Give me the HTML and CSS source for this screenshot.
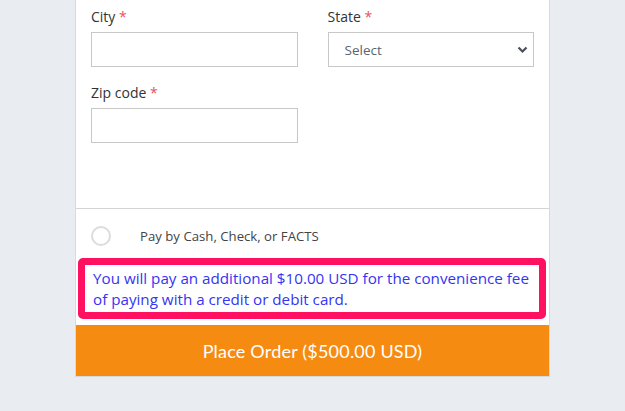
FILE: index.html
```html
<!DOCTYPE html>
<html>
<head>
<meta charset="utf-8">
<link rel="stylesheet" href="styles.css">
</head>
<body>
<div class="card">
  <div class="fields">
    <div class="field">
      <label class="label">City <span class="req">*</span></label>
      <input class="input" type="text">
    </div>
    <div class="field">
      <label class="label">State <span class="req">*</span></label>
      <div class="select-wrap">
        <select class="select"><option>Select</option></select>
        <svg class="chev" width="11" height="8" viewBox="0 0 11 8"><path d="M1.5 1.5 L5.5 5.5 L9.5 1.5" fill="none" stroke="#4a5058" stroke-width="2.2"/></svg>
      </div>
    </div>
    <div class="field">
      <label class="label">Zip code <span class="req">*</span></label>
      <input class="input" type="text">
    </div>
  </div>
  <div class="payment">
    <div class="radio-row">
      <span class="radio"></span>
      <span class="radio-text">Pay by Cash, Check, or FACTS</span>
    </div>
    <div class="notice">You will pay an additional $10.00 USD for the convenience fee of paying with a credit or debit card.</div>
  </div>
  <button class="order">Place Order ($500.00 USD)</button>
</div>
</body>
</html>
```
FILE: styles.css
```css
html, body {
  margin: 0;
  padding: 0;
  background: #e9ecf0;
}
body {
  font-family: "Open Sans", "Noto Sans", sans-serif;
}
.card {
  width: 473px;
  margin: 0 auto;
  background: #fff;
  border: 1px solid #d6dade;
  border-top: none;
}
.fields {
  display: grid;
  grid-template-columns: 1fr 1fr;
  column-gap: 30px;
  row-gap: 16px;
  padding: 7px 15px 65px;
  border-bottom: 1px solid #d4d4d4;
}
.field {
  display: flex;
  flex-direction: column;
}
.label {
  font-size: 14px;
  line-height: 20px;
  color: #333;
  margin-bottom: 5px;
}
.req {
  color: #e8505b;
}
.input {
  box-sizing: border-box;
  height: 35px;
  border: 1px solid #c8c8c8;
  margin: 0;
  padding: 0 10px;
  background: #fff;
}
.select-wrap {
  position: relative;
}
.select {
  box-sizing: border-box;
  width: 100%;
  height: 35px;
  border: 1px solid #c8c8c8;
  border-radius: 0;
  background: #fff;
  margin: 0;
  padding: 0 0 0 16px;
  appearance: none;
  -webkit-appearance: none;
  font-family: "Open Sans", "Noto Sans", sans-serif;
  font-size: 13.5px;
  color: #5a6370;
}
.chev {
  position: absolute;
  right: 6px;
  top: 14px;
}
.payment {
  padding: 17px 3px 6px 2px;
}
.radio-row {
  display: flex;
  align-items: center;
  padding-left: 13px;
  height: 20px;
}
.radio {
  box-sizing: border-box;
  width: 20px;
  height: 20px;
  border: 2px solid #dcdcdc;
  border-radius: 50%;
}
.radio-text {
  margin-left: 29px;
  font-size: 13.2px;
  color: #444;
}
.notice {
  margin-top: 12px;
  border: 7px solid #ff1060;
  border-radius: 5px;
  padding: 3px 8px 3px 8px;
  font-size: 15.2px;
  line-height: 20.5px;
  color: #3434f2;
}
.order {
  display: block;
  width: 100%;
  height: 51px;
  border: none;
  margin: 0;
  background: #f68b12;
  color: #fff;
  font-family: "Lato", sans-serif;
  font-size: 18px;
  font-weight: 400;
  letter-spacing: 0.2px;
  cursor: pointer;
}
```
